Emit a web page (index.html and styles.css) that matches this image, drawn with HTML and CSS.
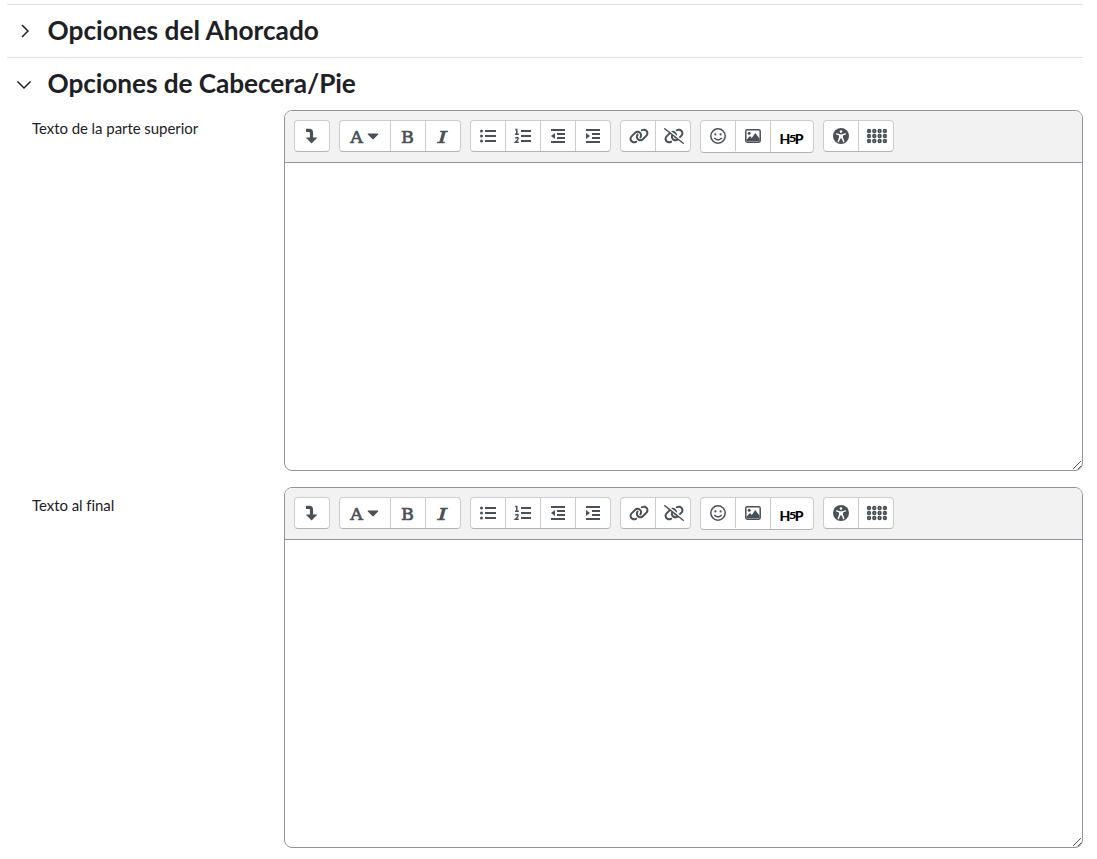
FILE: index.html
```
<!DOCTYPE html>
<html lang="es">
<head>
<meta charset="utf-8">
<title>Opciones</title>
<link rel="stylesheet" href="styles.css">
</head>
<body>
<form class="form">
  <section class="section">
    <header class="section-head">
      <svg class="chevron" viewBox="0 0 16 16"><path d="M6 3 12 9 6 15"/></svg>
      <h3 class="title">Opciones del Ahorcado</h3>
    </header>
  </section>
  <section class="section">
    <header class="section-head">
      <svg class="chevron" viewBox="0 0 16 16"><path d="M1.5 6.5 8 13 14.5 6.5"/></svg>
      <h3 class="title snug">Opciones de Cabecera/Pie</h3>
    </header>
    <div class="field">
      <label class="label">Texto de la parte superior</label>
      <div class="editor"></div>
    </div>
    <div class="field">
      <label class="label">Texto al final</label>
      <div class="editor"></div>
    </div>
  </section>
</form>
<template id="editor-template">
  <div class="toolbar">
    <div class="group">
      <span class="btn"><svg class="icon" viewBox="0 0 20 16"><path class="line heavy" d="M4 2.4h3.2q2.3 0 2.3 2.3v6"/><path d="M4.7 9.4h9.8q.6.2.2.8l-4.6 4.9q-.5.4-1 0L4.5 10.2q-.4-.6.2-.8z"/></svg></span>
    </div>
    <div class="group">
      <span class="btn wide"><span class="glyph">A</span><svg class="caret" viewBox="0 0 12 7"><path d="M1.2.5h9.6q1 .2.3 1L6.7 6q-.7.6-1.4 0L.9 1.5Q.2.7 1.2.5z"/></svg></span>
      <span class="btn"><span class="glyph">B</span></span>
      <span class="btn"><span class="glyph italic">I</span></span>
    </div>
    <div class="group">
      <span class="btn"><svg class="icon" viewBox="0 0 20 16"><path class="line" d="M7 3h11M7 8h11M7 13h11"/><circle cx="3.5" cy="3" r="1.5"/><circle cx="3.5" cy="8" r="1.5"/><circle cx="3.5" cy="13" r="1.5"/></svg></span>
      <span class="btn"><svg class="icon" viewBox="0 0 20 16"><path class="line" d="M8 3h10M8 8h10M8 13h10"/><path class="line thin" d="M2.3 1.4h1.5v4.8M2 6.3h3.8M2.2 10.2q3-1.4 3 .4 0 1.2-2.8 3.7h3.4"/></svg></span>
      <span class="btn"><svg class="icon" viewBox="0 0 20 16"><path class="line" d="M3 2h14M9 6h8M9 10h8M3 14h14"/><path d="M7 5v6L3 8z"/></svg></span>
      <span class="btn"><svg class="icon" viewBox="0 0 20 16"><path class="line" d="M3 2h14M9 6h8M9 10h8M3 14h14"/><path d="M3 5v6l4-3z"/></svg></span>
    </div>
    <div class="group">
      <span class="btn"><svg class="icon nudge" viewBox="0 0 640 512"><use href="#chain"/></svg></span>
      <span class="btn"><svg class="icon nudge" viewBox="0 0 640 512"><use href="#chain"/><path class="gap" d="M40 -10 640 460"/><path class="slash" d="M25 25 615 487"/></svg></span>
    </div>
    <div class="group tall">
      <span class="btn"><svg class="icon" viewBox="0 0 20 16"><circle class="line thin" cx="10" cy="8" r="7.2"/><circle cx="7.4" cy="6.4" r="1.1"/><circle cx="12.6" cy="6.4" r="1.1"/><path class="line thin" d="M6.3 10q3.7 3.8 7.4 0"/></svg></span>
      <span class="btn"><svg class="icon" viewBox="0 0 20 16"><rect class="line thin" x="2.8" y="1.8" width="14.4" height="12.4" rx="1.4"/><circle cx="6.2" cy="5.2" r="1.5"/><path d="M3.5 13.3v-1.6L7 8l1.8 2L12.2 5 16.5 10.6v2.7z"/></svg></span>
      <span class="btn h5p"><b>H</b><b class="five">5</b><b>P</b></span>
    </div>
    <div class="group">
      <span class="btn"><svg class="icon" viewBox="0 0 20 16"><circle cx="10" cy="8" r="8"/><circle class="white" cx="10" cy="3.6" r="1.3"/><path class="person" d="M5.6 5.9 8.8 7v2.5l-1.5 4M14.4 5.9 11.2 7v2.5l1.5 4"/><path class="white" d="M8.2 6.4h3.6v4H8.2z"/></svg></span>
      <span class="btn"><svg class="dots" viewBox="0 0 22 16"></svg></span>
    </div>
  </div>
  <div class="area" contenteditable="true"></div>
  <svg class="grip" viewBox="0 0 12 12"><path d="M3 11 11 3M7.5 11.5 11.5 7.5"/></svg>
</template>
<svg class="defs"><defs><path id="chain" d="M579.8 267.7c56.5-56.5 56.5-148 0-204.5c-50-50-128.8-56.5-186.3-15.4l-1.6 1.1c-14.4 10.3-17.7 30.3-7.4 44.6s30.3 17.7 44.6 7.4l1.6-1.1c32.1-22.9 76-19.3 103.8 8.6c31.5 31.5 31.5 82.5 0 114L422.3 334.8c-31.5 31.5-82.5 31.5-114 0c-27.9-27.9-31.5-71.8-8.6-103.8l1.1-1.6c10.3-14.4 6.9-34.4-7.4-44.6s-34.4-6.9-44.6 7.4l-1.1 1.6C206.5 251.2 213 330 263 380c56.5 56.5 148 56.5 204.5 0L579.8 267.7zM60.2 244.3c-56.5 56.5-56.5 148 0 204.5c50 50 128.8 56.5 186.3 15.4l1.6-1.1c14.4-10.3 17.7-30.3 7.4-44.6s-30.3-17.7-44.6-7.4l-1.6 1.1c-32.1 22.9-76 19.3-103.8-8.6C74 372 74 321 105.5 289.5L217.7 177.2c31.5-31.5 82.5-31.5 114 0c27.9 27.9 31.5 71.8 8.6 103.9l-1.1 1.6c-10.3 14.4-6.9 34.4 7.4 44.6s34.4 6.9 44.6-7.4l1.1-1.6C433.5 260.8 427 182 377 132c-56.5-56.5-148-56.5-204.5 0L60.2 244.3z"/></defs></svg>
<script src="editor.js"></script>
</body>
</html>
```

FILE: styles.css
```
* { box-sizing: border-box; }
body {
  margin: 0;
  background: #fff;
  color: #1d2125;
  font: 400 15px/22.5px Lato, sans-serif;
}
.form { width: 1076px; margin: 4px 0 0 7px; }
.section { border-top: 1px solid #dee2e6; }
.section-head {
  display: flex;
  align-items: center;
  height: 52px;
  padding: 0 0 2px 9px;
}
.chevron {
  width: 16px;
  height: 16px;
  margin-right: 15.5px;
  fill: none;
  stroke: #1d2125;
  stroke-width: 1.5;
}
.title { margin: 0; font-size: 26.25px; line-height: 32px; font-weight: 700; }
.snug { letter-spacing: -0.09px; }
.field { display: flex; margin-bottom: 16px; }
.label { width: 277px; padding: 7px 0 0 25px; letter-spacing: -0.06px; }
.editor {
  position: relative;
  width: 799px;
  height: 361px;
  border: 1px solid #8f959e;
  border-radius: 8px;
  overflow: hidden;
}
.toolbar {
  display: flex;
  align-items: flex-start;
  gap: 9px;
  height: 52px;
  padding: 9px;
  background: #f2f2f2;
  border-bottom: 1px solid #8f959e;
}
.group {
  display: flex;
  height: 32px;
  background: #fff;
  border: 1px solid #ccc;
  border-bottom-color: #b3b3b3;
  border-radius: 4px;
}
.tall { height: 33px; }
.btn {
  display: flex;
  align-items: center;
  justify-content: center;
  width: 35px;
  height: 30px;
  padding-right: 1px;
  border-left: 1px solid #ccc;
}
.btn:first-child { width: 34px; border-left: 0; }
.btn.wide { width: 50px; gap: 4px; padding-right: 1px; }
.btn.h5p {
  width: 43px;
  height: 31px;
  padding-top: 4px;
  color: #000;
  font: 900 14px/14px Lato, sans-serif;
}
.h5p .five { font-size: 9px; margin: 1px -0.5px 0; transform: scaleX(1.4); }
.glyph {
  padding-top: 2px;
  color: #495057;
  font: 400 17.5px/20px "DejaVu Serif", serif;
  -webkit-text-stroke: 0.7px #495057;
}
.italic { font-style: italic; transform: scaleX(1.35); }
.icon { width: 20px; height: 16px; fill: #495057; overflow: visible; }
.nudge { margin-left: 3px; }
.caret { width: 12px; height: 7px; margin-top: 1px; fill: #495057; }
.dots { width: 22px; height: 16px; margin-left: 3px; fill: none; stroke: #495057; stroke-width: 1.8; }
.line { fill: none; stroke: #495057; stroke-width: 2; }
.thin { stroke-width: 1.5; }
.heavy { stroke-width: 3.2; }
.gap { stroke: #fff; stroke-width: 60; }
.slash { stroke: #495057; stroke-width: 48; stroke-linecap: round; }
.white { fill: #fff; }
.person { fill: none; stroke: #fff; stroke-width: 1.5; stroke-linecap: round; }
.area { height: 307px; outline: 0; }
.grip {
  position: absolute;
  right: 0;
  bottom: 0;
  width: 12px;
  height: 12px;
  fill: none;
  stroke: #555;
  stroke-width: 1;
}
.defs { display: none; }
```

FILE: editor.js
```
const template = document.getElementById('editor-template');
document.querySelectorAll('.editor').forEach((editor) => {
  const content = template.content.cloneNode(true);
  const dots = content.querySelector('.dots');
  for (let row = 0; row < 3; row++) {
    for (let col = 0; col < 4; col++) {
      const dot = document.createElementNS('http://www.w3.org/2000/svg', 'circle');
      dot.setAttribute('cx', 3 + col * 5.3);
      dot.setAttribute('cy', 3 + row * 5);
      dot.setAttribute('r', 1.3);
      dots.append(dot);
    }
  }
  editor.append(content);
});
```
